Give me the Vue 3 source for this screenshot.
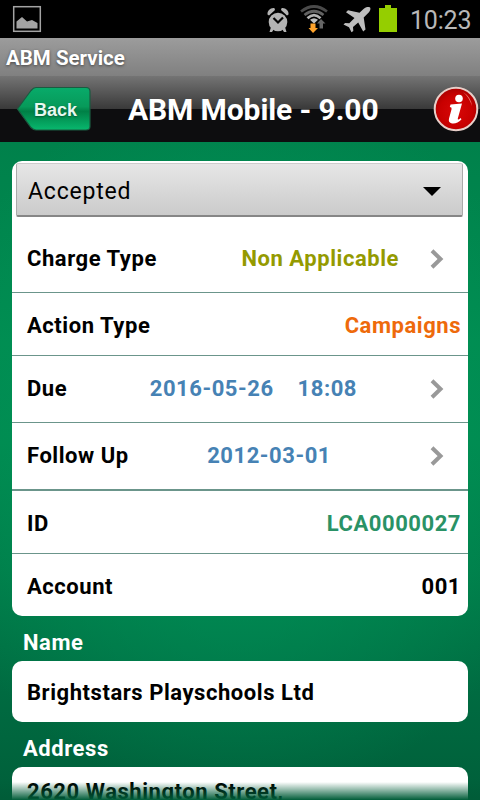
<template>
  <div class="screen">
    <div class="status-bar">
      <svg class="picture-icon" width="30" height="28" viewBox="0 0 30 28">
        <rect x="1.700" y="1.700" width="26.600" height="24.600" fill="none" stroke="#a3a3a3" stroke-width="1.500" />
        <path d="M4.500 23.500V16.500l5.500-4.500 5 4.500 5-1.500 5.500 3v5.500z" fill="#a3a3a3" />
      </svg>
      <div class="status-icons">
        <svg width="22" height="26" viewBox="0 0 22 26">
          <g fill="#b4b4b4">
            <circle cx="11" cy="15" r="9.3" />
            <path d="M0.5 7.5C0 4 3.500 0.500 7.500 1.200L8 3 2 8.500z" />
            <path d="M21.500 7.500C22 4 18.500 0.500 14.500 1.200L14 3 20 8.500z" />
            <path d="M4 20l-1.500 5h2.500l2-3zM18 20l1.500 5h-2.500l-2-3z" />
          </g>
          <path d="M6.500 11l4.500 4.500 5-5" fill="none" stroke="#050505" stroke-width="2.200" />
        </svg>
        <svg class="wifi-icon" width="28" height="28" viewBox="0 0 28 28">
          <g fill="none" stroke-width="2.700">
            <path d="M1 6.500Q14-3.500 27 6.500" stroke="#4a4a4a" />
            <path d="M4.500 10Q14 2.500 23.500 10" stroke="#626262" />
            <path d="M7.500 13.200Q14 7 20.500 13.200" stroke="#b4b4b4" />
          </g>
          <path d="M10 14.800q4-3 8 0L14 18.500z" fill="#c0c0c0" />
          <path d="M10.500 18.500h5v4.500h2.500L13 28l-4.500-5h2z" fill="#ffa32b" />
          <path d="M19.500 23.500v-5h-2.500l4-4.500 4.500 4.500H23v5z" fill="#666" />
        </svg>
        <svg class="plane-icon" width="28" height="26" viewBox="0 0 28 26">
          <path d="M27 0.500c1.200 1.200-.3 4-2.300 6l-4 4L22.500 22.500l-2.300 2-5-9-5.200 4.500.3 4-1.800 1.300-2.500-5L0.500 17.500l1.600-1.600 4.200.3L11.500 11 3 5.300l2-2 11.500 2.500 4-3.700c2-2 5-3 6.500-1.600z" fill="#bdbdbd" />
        </svg>
        <svg class="battery-icon" width="18" height="27" viewBox="0 0 18 27">
          <path d="M0 3h6V0h6v3h6v24H0z" fill="#95ce00" />
        </svg>
      </div>
      <span class="clock">10:23</span>
    </div>

    <div class="app-title">ABM Service</div>

    <header class="nav-bar">
      <button class="back" type="button">
        <svg width="76" height="46" viewBox="0 0 76 46">
          <defs>
            <linearGradient id="backFill" x1="0" y1="0" x2="0" y2="1">
              <stop offset="0" stop-color="#08ab6a" />
              <stop offset=".45" stop-color="#079a5a" />
              <stop offset=".56" stop-color="#008046" />
              <stop offset="1" stop-color="#08b86e" />
            </linearGradient>
          </defs>
          <path d="M1.500 23L15 4.500Q17.500 1.500 20 1.500H70Q74 1.500 74 5.500V40.500Q74 44 70 44H20Q17.500 44 15 41.500z" fill="url(#backFill)" stroke="#1b5a40" stroke-width="1.200" />
        </svg>
        <span class="back-text">Back</span>
      </button>
      <h1 class="nav-title">ABM Mobile - 9.00</h1>
      <svg class="info" width="46" height="46" viewBox="0 0 46 46">
        <defs>
          <radialGradient id="infoFill" cx=".5" cy=".55" r=".55">
            <stop offset="0" stop-color="#d80808" />
            <stop offset=".7" stop-color="#c80000" />
            <stop offset="1" stop-color="#a80000" />
          </radialGradient>
        </defs>
        <circle cx="23" cy="23" r="21.300" fill="url(#infoFill)" stroke="#e8cfc9" stroke-width="2" />
        <path d="M30 6q8 5 9 14-3-9-9-14z" fill="#ef7a70" />
        <circle cx="26" cy="12.500" r="3.800" fill="#fff" />
        <path d="M17.500 18.500l11.500-1-4.200 15q-.3 1.500 1.200.8l1.800-1.300.6 1.500q-4.400 4.700-9.400 4-4.200-.8-2.900-5.200l2.500-9.300q.3-1.800-1.800-1.900z" fill="#fff" />
      </svg>
    </header>

    <main class="content">
      <section class="card details">
        <div class="select">
          <span>Accepted</span>
          <svg width="18" height="9" viewBox="0 0 18 9"><path d="M0 0h18L9 9z" /></svg>
        </div>
        <div v-for="row in rows" :key="row.label" class="row" :class="row.type">
          <span class="label">{{ row.label }}</span>
          <span class="value">
            <span v-for="v in row.values" :key="v">{{ v }}</span>
          </span>
          <svg v-if="row.arrow" class="chevron" width="14" height="20" viewBox="0 0 14 20">
            <path d="M2 1.800L10.500 10 2 18.200" fill="none" stroke="#999" stroke-width="4" />
          </svg>
        </div>
      </section>

      <h2 class="heading">Name</h2>
      <section class="card name">Brightstars Playschools Ltd</section>
      <h2 class="heading">Address</h2>
      <section class="card address">2620 Washington Street,</section>
    </main>
    <div class="fade"></div>
  </div>
</template>

<script setup>
const rows = [
  { label: 'Charge Type', values: ['Non Applicable'], type: 'charge', arrow: true },
  { label: 'Action Type', values: ['Campaigns'], type: 'action' },
  { label: 'Due', values: ['2016-05-26', '18:08'], type: 'due', arrow: true },
  { label: 'Follow Up', values: ['2012-03-01'], type: 'follow', arrow: true },
  { label: 'ID', values: ['LCA0000027'], type: 'id' },
  { label: 'Account', values: ['001'], type: 'account' }
];
</script>

<style>
body {
  margin: 0;
  overflow: hidden;
}
</style>

<style scoped>
.screen {
  position: relative;
  display: flex;
  flex-direction: column;
  width: 480px;
  height: 800px;
  overflow: hidden;
  font-family: Roboto, "Liberation Sans", sans-serif;
  font-size: 22px;
  font-weight: 700;
  letter-spacing: 0.55px;
  color: #000;
  background: #00844d;
}
.status-bar {
  display: flex;
  flex: none;
  height: 38px;
  box-sizing: border-box;
  padding: 5px 9px 0 12px;
  background: #000;
}
.status-icons {
  display: flex;
  margin-left: auto;
  padding-top: 2px;
}
.wifi-icon {
  margin: -2px 0 0 11px;
}
.plane-icon {
  margin-left: 15px;
}
.battery-icon {
  margin: -2px 0 0 8px;
}
.clock {
  width: 61px;
  margin-left: 13px;
  font-size: 25px;
  font-weight: 400;
  letter-spacing: -0.2px;
  line-height: 32px;
  white-space: nowrap;
  color: #b8b8b8;
}
.app-title {
  flex: none;
  height: 38px;
  padding-left: 6px;
  line-height: 40px;
  font-size: 20.5px;
  letter-spacing: 0;
  color: #fff;
  text-shadow: 0 1px 3px #444;
  background: linear-gradient(#9c9c9c, #808080);
}
.nav-bar {
  display: flex;
  flex: none;
  align-items: center;
  height: 66px;
  box-sizing: border-box;
  padding: 0 1px 0 16px;
  background: linear-gradient(#747474 0, #393939 33px, #0d0d0f 33px, #0d0d0f 100%);
}
.back {
  position: relative;
  width: 76px;
  height: 46px;
  padding: 0;
  border: 0;
  background: none;
}
.back svg {
  display: block;
}
.back-text {
  position: absolute;
  left: 18px;
  top: 13px;
  font: bold 18px/22px "Liberation Sans", Arial, sans-serif;
  color: #e8f8f0;
  text-shadow: 0 1px 2px #045c34;
}
.nav-title {
  margin: 0 0 0 36px;
  padding-top: 1px;
  font-size: 30px;
  letter-spacing: -0.1px;
  line-height: 36px;
  white-space: nowrap;
  color: #fff;
}
.info {
  flex: none;
  margin-left: auto;
}
.content {
  flex: 1;
  padding: 19px 12px 0;
  background:
    radial-gradient(ellipse 330px 360px at 240px 300px, #00945a 0, rgba(0, 148, 84, 0) 100%),
    linear-gradient(#00814b 0, #008c50 200px, #008a4f 300px, #007d49 430px, #006b41 550px, #005c38 100%);
}
.card {
  box-sizing: border-box;
  border-radius: 10px;
  background: #fff;
}
.details {
  height: 455px;
  padding-top: 2px;
}
.select {
  display: flex;
  align-items: center;
  justify-content: space-between;
  box-sizing: border-box;
  height: 54px;
  margin: 0 5px 8px 4px;
  padding: 3px 21px 0 11px;
  border: 1px solid #aaa;
  border-top-color: #ccc;
  border-bottom: 2px solid #868686;
  border-radius: 2px;
  font-size: 23px;
  font-weight: 400;
  letter-spacing: 0.8px;
  background: linear-gradient(#e6e6e6, #cbcbcb);
}
.row {
  display: flex;
  align-items: center;
  box-sizing: border-box;
  height: 63px;
  padding: 2px 7px 0 15px;
  border-bottom: 1px solid #6b958b;
}
.charge {
  height: 68px;
  padding-top: 0;
}
.due {
  height: 67px;
  padding-top: 0;
}
.follow {
  height: 68px;
  padding-top: 0;
  border-bottom-width: 2px;
}
.due .label,
.due .value,
.follow .label,
.follow .value {
  padding-bottom: 2px;
}
.account {
  height: 62px;
  border-bottom: 0;
}
.value {
  display: flex;
  gap: 24px;
  margin-left: auto;
}
.chevron {
  flex: none;
  margin: 0 17px 0 31px;
}
.charge .value {
  color: #949a00;
}
.action .value {
  color: #ee6a0b;
}
.due .value,
.follow .value {
  color: #4682b4;
}
.due .chevron {
  margin-left: 73px;
}
.follow .chevron {
  margin-left: 99px;
}
.id .value {
  color: #2a9266;
}
.heading {
  margin: 0;
  padding-left: 11px;
  height: 45px;
  line-height: 54px;
  font-size: 22px;
  color: #fff;
}
.name,
.address {
  height: 61px;
  padding-left: 15px;
  line-height: 63px;
}
.address {
  line-height: 50px;
}
.fade {
  position: absolute;
  left: 0;
  right: 0;
  bottom: 0;
  height: 18px;
  background: linear-gradient(rgba(0, 92, 56, 0), #005c38);
}
</style>
